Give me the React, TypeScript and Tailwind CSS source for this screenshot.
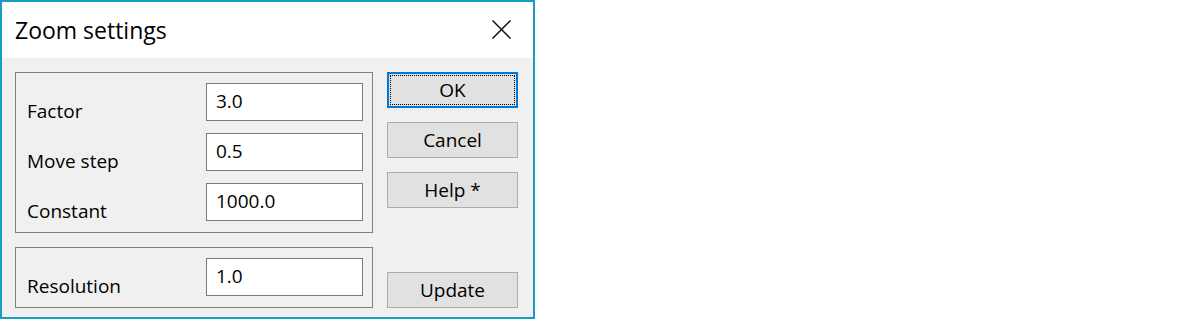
export default function App() {
  const font = { fontFamily: '"Open Sans", "Noto Sans", sans-serif' };

  const Row = ({ label, value }: { label: string; value: string }) => (
    <div className="flex h-[50px] items-start">
      <div className="pt-[15px] pl-[11px] w-[190px] text-[19px] leading-[26px] text-black">
        {label}
      </div>
      <div className="h-[38px] w-[157px] border border-[#7a7a7a] bg-white pl-[9px] text-[19px] leading-[34px] text-black">
        {value}
      </div>
    </div>
  );

  const Button = ({ label, focus }: { label: string; focus?: boolean }) => (
    <button
      className={`h-[36px] w-[131px] shrink-0 text-[19px] leading-none text-black ${
        focus
          ? "border-2 border-[#0078d7] bg-[#e1e1e1] p-[1px]"
          : "border border-[#adadad] bg-[#e1e1e1]"
      }`}
    >
      {focus ? (
        <span className="flex h-full w-full items-center justify-center border border-dotted border-black">
          {label}
        </span>
      ) : (
        label
      )}
    </button>
  );

  return (
    <div className="h-[319px] w-[1200px] bg-white" style={font}>
      <div className="flex h-[319px] w-[535px] flex-col border-2 border-[#1a9bc0]">
        <div className="flex h-[56px] shrink-0 items-center justify-between bg-white pl-[13px] pr-[22px]">
          <span className="text-[23px] leading-none text-black">Zoom settings</span>
          <svg width="19" height="19" viewBox="0 0 19 19" className="-mt-[1px]">
            <path d="M0.5 0.5 L18.5 18.5 M18.5 0.5 L0.5 18.5" stroke="#111" strokeWidth="1.5" />
          </svg>
        </div>
        <div className="flex flex-1 gap-[14px] bg-[#f0f0f0] pl-[13px] pt-[14px]">
          <div className="flex flex-col gap-[14px]">
            <div className="h-[161px] w-[358px] border border-[#7f7f7f] pt-[10px]">
              <Row label="Factor" value="3.0" />
              <Row label="Move step" value="0.5" />
              <Row label="Constant" value="1000.0" />
            </div>
            <div className="h-[61px] w-[358px] border border-[#7f7f7f] pt-[10px]">
              <Row label="Resolution" value="1.0" />
            </div>
          </div>
          <div className="flex flex-col gap-[14px]">
            <Button label="OK" focus />
            <Button label="Cancel" />
            <Button label="Help *" />
            <div className="h-[36px] shrink-0" />
            <Button label="Update" />
          </div>
        </div>
      </div>
    </div>
  );
}
